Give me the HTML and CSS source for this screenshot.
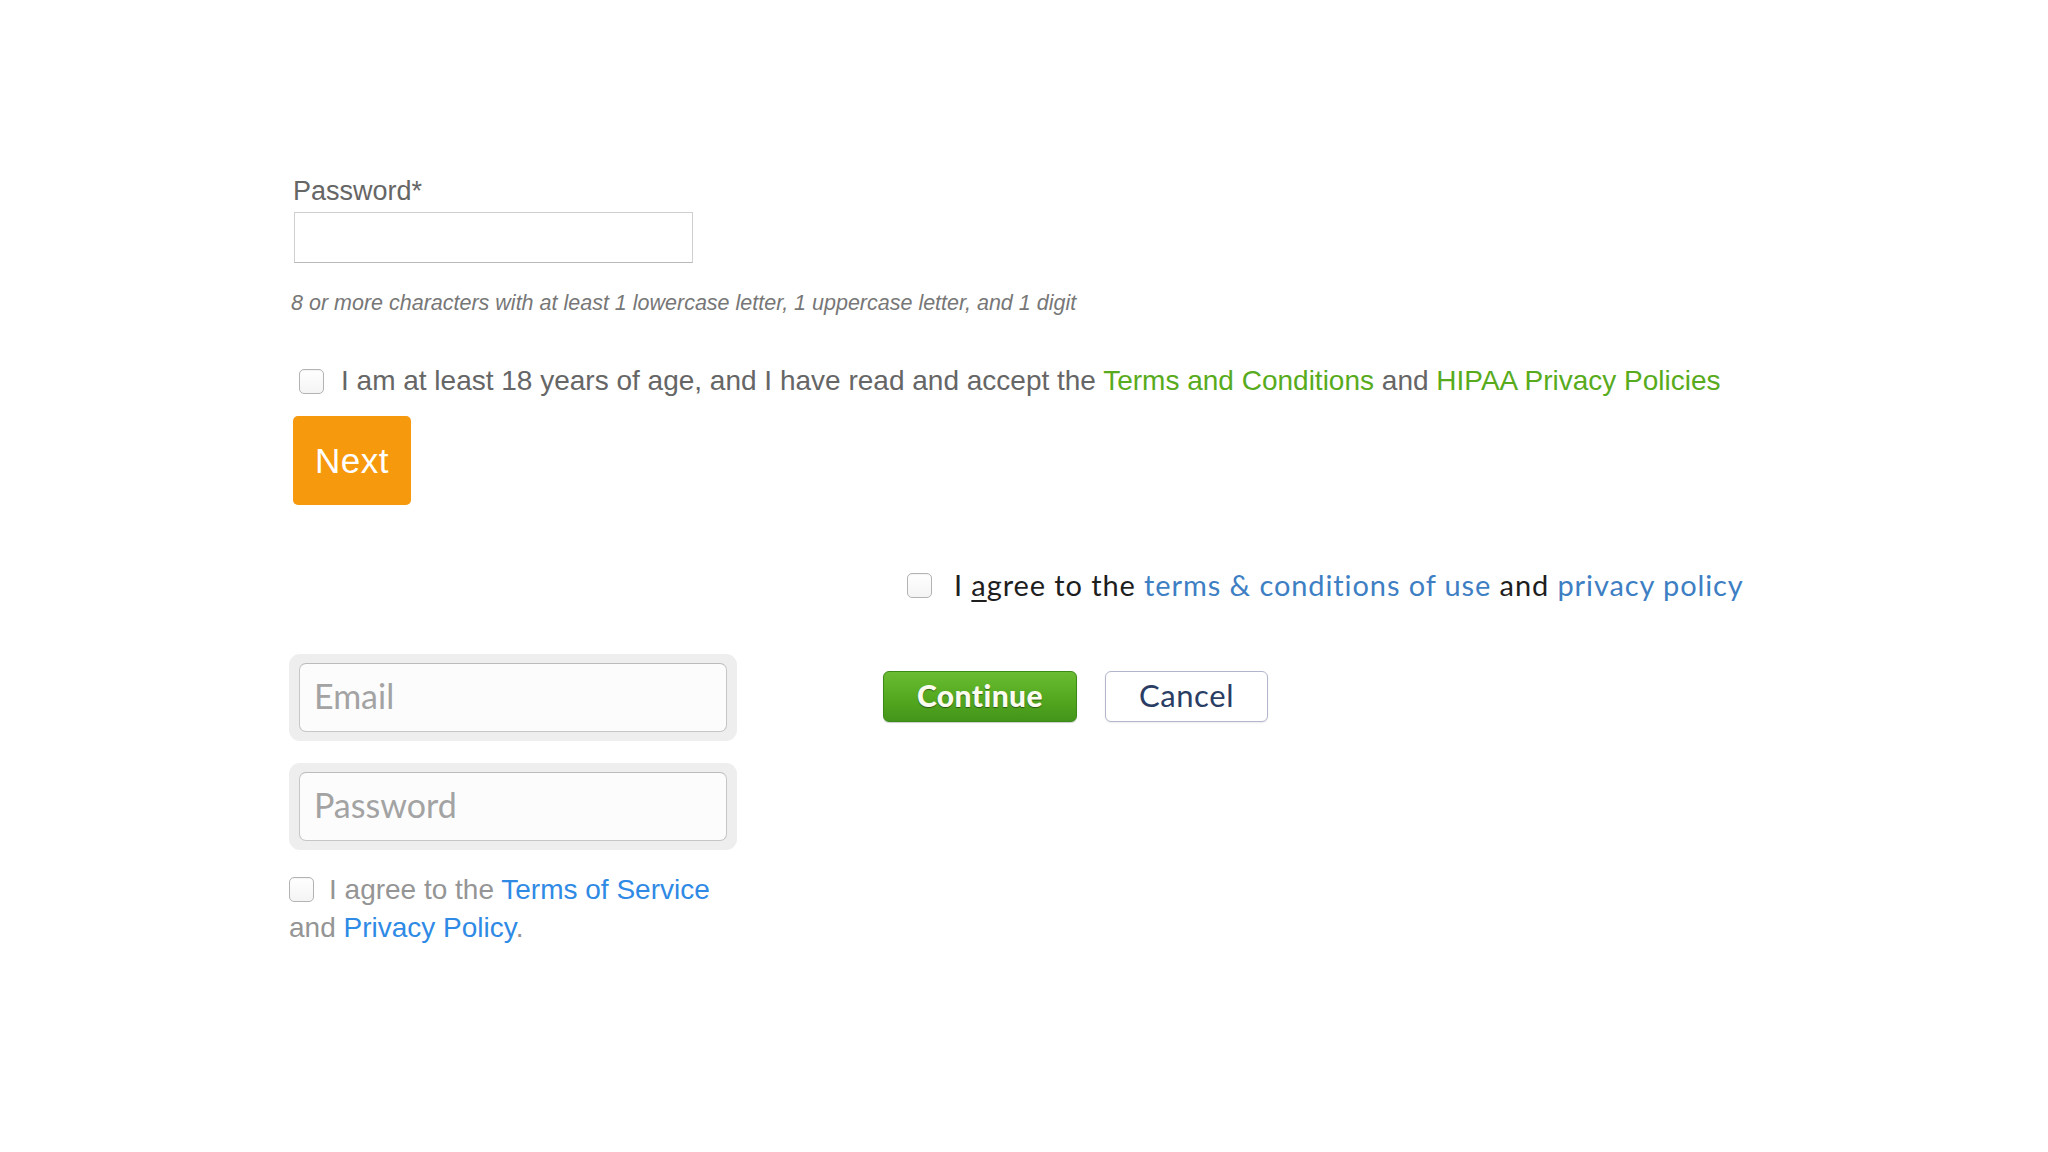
FILE: index.html
```html
<!DOCTYPE html>
<html lang="en">
<head>
<meta charset="utf-8">
<title>Sign up</title>
<link rel="stylesheet" href="styles.css">
</head>
<body>
<main class="page">
  <section class="signup">
    <label class="field-label" for="pw">Password*</label>
    <input class="text-input" id="pw" type="password">
    <p class="hint">8 or more characters with at least 1 lowercase letter, 1 uppercase letter, and 1 digit</p>
    <label class="agree-hipaa">
      <input class="box" type="checkbox">
      <span>I am at least 18 years of age, and I have read and accept the <a class="green-link" href="#">Terms and Conditions</a> and <a class="green-link" href="#">HIPAA Privacy Policies</a></span>
    </label>
    <button class="btn-next" type="button">Next</button>
  </section>

  <section class="agree-use">
    <input class="box" type="checkbox">
    <span class="agree-use-text">I <u>a</u>gree to the <a class="blue-link" href="#">terms &amp; conditions of use</a> and <a class="blue-link" href="#">privacy policy</a></span>
  </section>

  <section class="login-row">
    <div class="login-form">
      <div class="field-wrap"><input class="soft-input" type="text" placeholder="Email"></div>
      <div class="field-wrap"><input class="soft-input" type="password" placeholder="Password"></div>
      <p class="agree-tos"><input class="box box-inline" type="checkbox">I agree to the <a class="tos-link" href="#">Terms of Service</a> and <a class="tos-link" href="#">Privacy Policy</a>.</p>
    </div>
    <div class="actions">
      <button class="btn-continue" type="button">Continue</button>
      <button class="btn-cancel" type="button">Cancel</button>
    </div>
  </section>
</main>
</body>
</html>
```

FILE: styles.css
```css
* { box-sizing: border-box; }

html, body {
  margin: 0;
  background: #ffffff;
}

body {
  font-family: "Liberation Sans", Arial, Helvetica, sans-serif;
}

a { text-decoration: none; }

.page {
  padding: 176px 0 0 289px;
}

/* ---------- first form ---------- */
.signup {
  display: flex;
  flex-direction: column;
  align-items: flex-start;
  padding-left: 4px;
}

.field-label {
  font-size: 27px;
  line-height: 30px;
  color: #666666;
}

.text-input {
  margin: 6px 0 0 1px;
  width: 399px;
  height: 51px;
  border: 1px solid #cfcfcf;
  border-bottom-color: #b9b9b9;
  border-radius: 0;
  background: #fff;
  padding: 0 10px;
  font-size: 22px;
  outline: none;
}

.hint {
  margin: 28px 0 0 -2px;
  font-size: 21.5px;
  line-height: 24px;
  font-style: italic;
  color: #777777;
}

.agree-hipaa {
  margin: 50px 0 0 6px;
  display: flex;
  align-items: center;
  gap: 17px;
  font-size: 28px;
  line-height: 32px;
  color: #666666;
}

.green-link { color: #58ab1c; }

.box {
  -webkit-appearance: none;
  appearance: none;
  margin: 0;
  flex: none;
  width: 25px;
  height: 25px;
  border: 1px solid #b3b3b3;
  border-radius: 5px;
  background: linear-gradient(#ffffff, #f4f4f4);
  box-shadow: inset 0 1px 1px rgba(0,0,0,0.05);
}

.btn-next {
  margin-top: 19px;
  width: 118px;
  height: 89px;
  border: none;
  border-radius: 5px;
  background: #f7990c;
  color: #ffffff;
  font-family: "Liberation Sans", Arial, sans-serif;
  font-size: 35px;
  letter-spacing: 0.5px;
  padding: 0;
}

/* ---------- second agree row ---------- */
.agree-use {
  margin: 63px 0 0 618px;
  display: flex;
  align-items: center;
  gap: 22px;
}

.agree-use-text {
  font-family: Lato, "Open Sans", sans-serif;
  font-size: 29px;
  letter-spacing: 0.9px;
  line-height: 34px;
  color: #1e1e1e;
}

.agree-use-text u {
  text-decoration-thickness: 2px;
  text-underline-offset: 4px;
}

.blue-link { color: #3e7fc4; }

/* ---------- login row ---------- */
.login-row {
  margin-top: 52px;
  display: flex;
  align-items: flex-start;
  gap: 146px;
}

.login-form {
  width: 448px;
  display: flex;
  flex-direction: column;
  gap: 22px;
}

.field-wrap {
  background: #eeeeee;
  border-radius: 11px;
  padding: 9px 10px 9px 10px;
}

.soft-input {
  display: block;
  width: 100%;
  height: 69px;
  border: 1px solid #c6c6c6;
  border-top-color: #bcbcbc;
  border-radius: 7px;
  background: #fcfcfd;
  padding: 0 15px 5px 14px;
  font-family: Lato, "Open Sans", sans-serif;
  font-size: 34px;
  color: #333;
  outline: none;
}

.soft-input::placeholder {
  color: #a3a3a3;
}

.agree-tos {
  margin: -1px 0 0 0;
  font-size: 28px;
  line-height: 38px;
  color: #959595;
}

.box-inline {
  display: inline-block;
  vertical-align: -3px;
  margin-right: 15px;
}

.tos-link { color: #2f8ae5; }

.actions {
  margin-top: 17px;
  display: flex;
  gap: 28px;
}

.btn-continue {
  width: 194px;
  height: 51px;
  border: 1px solid #3b8a18;
  border-radius: 6px;
  background: linear-gradient(#6abd32, #53a81f 55%, #43951a);
  box-shadow: 0 1px 1px rgba(0,0,0,0.2);
  color: #fbfbf0;
  font-family: Lato, "Open Sans", sans-serif;
  font-weight: 900;
  font-size: 30px;
  letter-spacing: 0.4px;
  text-shadow: 0 1px 1px rgba(0,0,0,0.45);
  padding: 0 0 3px 0;
}

.btn-cancel {
  width: 163px;
  height: 51px;
  border: 1px solid #b2b6cd;
  border-radius: 6px;
  background: #ffffff;
  box-shadow: 0 1px 2px rgba(0,0,0,0.08);
  color: #2a3d64;
  font-family: Lato, "Open Sans", sans-serif;
  font-size: 31px;
  letter-spacing: 0.6px;
  padding: 0 0 3px 0;
}
```
